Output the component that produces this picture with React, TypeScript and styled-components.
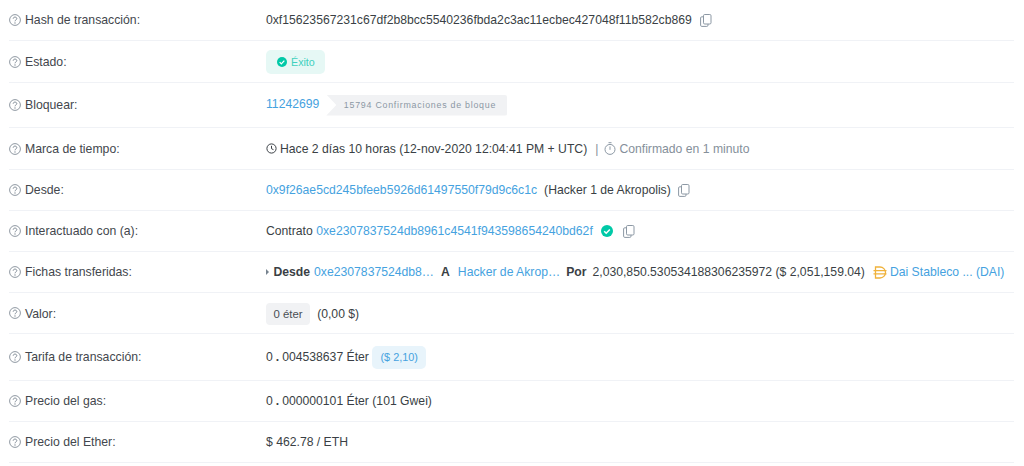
import React from "react";
import styled, { createGlobalStyle } from "styled-components";

const Global = createGlobalStyle`
  html, body { margin: 0; padding: 0; background: #fff; }
  body { font-family: "Liberation Sans", Arial, sans-serif; font-size: 12.25px; color: #4a4f55; overflow: hidden; }
`;
const Page = styled.div`
  width: 1024px; height: 466px; box-sizing: border-box; padding: 0 10px 0 9px; background: #fff; overflow: hidden;
`;
const Row = styled.div<{ $h: number }>`
  height: ${(p) => p.$h}px; box-sizing: border-box; border-bottom: 1px solid #f0f2f6;
  display: flex; align-items: center;
`;
const Label = styled.div`
  width: 257px; flex: none; display: flex; align-items: center; gap: 4px; color: #43474d;
`;
const Value = styled.div`
  flex: 1; min-width: 0; display: flex; align-items: center; white-space: nowrap; color: #3a3f45; font-size: 12.19px;
`;
const Link = styled.a`color: #45a2e0; text-decoration: none;`;
const Muted = styled.span`color: #858f9a;`;
const Gap = styled.span<{ $w: number }>`display: inline-block; width: ${(p) => p.$w}px; flex: none;`;
const StatusPill = styled.span`
  display: inline-flex; align-items: center; gap: 4px; height: 24px; padding: 0 10px 0 11px; border-radius: 5px;
  background: #e6f8f5; color: #3fd0bd; font-size: 10.7px;
`;
const BlockNumber = styled(Link)`position: relative; top: -1px;`;
const BlockTag = styled.span`
  margin-left: 7px; height: 21px; padding: 0 11px 0 17.5px; display: inline-flex; align-items: center;
  background: #f1f2f4; color: #8c98a4; font-size: 8.85px; letter-spacing: 0.75px; border-radius: 0 2px 2px 0;
  clip-path: polygon(0 0, 100% 0, 100% 100%, 0 100%, 10px 50%);
`;
const GreyPill = styled.span`
  display: inline-flex; align-items: center; height: 22px; padding: 0 7.5px; border-radius: 4px;
  background: #f1f2f4; color: #4a4f55; font-size: 11.4px; position: relative; top: 1px;
`;
const Shift = styled.span`position: relative; top: 1px;`;
const BluePill = styled.span`
  display: inline-flex; align-items: center; height: 23px; padding: 0 8px; border-radius: 5px; margin-left: 3.5px;
  background: #e8f4fb; color: #45a2e0; font-size: 10.9px;
`;
const Strong = styled.b`color: #3a3f45;`;
const Dot = styled.b`color: #3a3f45; margin: 0 3px 0 3px;`;

const Help = () => (
  <svg width="12" height="12" viewBox="0 0 12 12" fill="none">
    <circle cx="6" cy="6" r="5.4" stroke="#8f98a2" strokeWidth="1" />
    <path d="M4.2 4.7C4.2 3.7 5 3.1 6 3.1s1.8.6 1.8 1.5c0 1.3-1.8 1.3-1.8 2.7" stroke="#7f8a95" strokeWidth="1" />
    <circle cx="6" cy="9" r="0.65" fill="#7f8a95" />
  </svg>
);
const Copy = () => (
  <svg width="12" height="13" viewBox="0 0 12 13" fill="none" stroke="#8c98a4" strokeWidth="1">
    <rect x="3.5" y="0.5" width="7.5" height="9.5" rx="1.2" />
    <path d="M3.5 2.8H1.8A1.2 1.2 0 0 0 .6 4v7.2A1.2 1.2 0 0 0 1.8 12.4h5A1.2 1.2 0 0 0 8 11.2V10" />
  </svg>
);
const Check = ({ s }: { s: number }) => (
  <svg width={s} height={s} viewBox="0 0 12 12">
    <circle cx="6" cy="6" r="6" fill="#00c9a7" />
    <path d="M3.2 6.2l2 2 3.6-3.8" stroke="#fff" strokeWidth="1.5" fill="none" />
  </svg>
);
const Clock = () => (
  <svg width="11" height="11" viewBox="0 0 11 11" fill="none" stroke="#3a3f45" strokeWidth="1">
    <circle cx="5.5" cy="5.5" r="4.6" />
    <path d="M5.5 2.8v2.9l2 1" />
  </svg>
);
const Timer = () => (
  <svg width="12" height="13" viewBox="0 0 12 13" fill="none" stroke="#8c98a4" strokeWidth="1">
    <circle cx="6" cy="7.4" r="5" />
    <path d="M4.5.7h3M6 4.4v3.4" />
  </svg>
);
const Caret = () => (
  <svg width="3" height="6" viewBox="0 0 3 6"><path d="M0 0l3 3-3 3z" fill="#77838f" /></svg>
);
const Dai = () => (
  <svg width="14" height="13" viewBox="0 0 14 13" fill="none" stroke="#f0b23b" strokeWidth="1.3">
    <path d="M2.5 1h4.5a5.5 5.5 0 0 1 0 11H2.5z" />
    <path d="M0.5 4.7h13M0.5 7.8h13" />
  </svg>
);

export default function App() {
  return (
    <Page>
      <Global />
      <Row $h={41}>
        <Label><Help />Hash de transacción:</Label>
        <Value>0xf15623567231c67df2b8bcc5540236fbda2c3ac11ecbec427048f11b582cb869<Gap $w={8} /><Copy /></Value>
      </Row>
      <Row $h={42}>
        <Label><Help />Estado:</Label>
        <Value><StatusPill><Check s={10} />Éxito</StatusPill></Value>
      </Row>
      <Row $h={45}>
        <Label><Help />Bloquear:</Label>
        <Value><BlockNumber>11242699</BlockNumber><BlockTag>15794 Confirmaciones de bloque</BlockTag></Value>
      </Row>
      <Row $h={42}>
        <Label><Help />Marca de tiempo:</Label>
        <Value>
          <Clock /><Gap $w={3} />Hace 2 días 10 horas (12-nov-2020 12:04:41 PM + UTC)<Gap $w={8} /><Muted>|</Muted><Gap $w={6} /><Timer /><Gap $w={3} /><Muted>Confirmado en 1 minuto</Muted>
        </Value>
      </Row>
      <Row $h={41}>
        <Label><Help />Desde:</Label>
        <Value><Link>0x9f26ae5cd245bfeeb5926d61497550f79d9c6c1c</Link><Gap $w={7} />(Hacker 1 de Akropolis)<Gap $w={7} /><Copy /></Value>
      </Row>
      <Row $h={41}>
        <Label><Help />Interactuado con (a):</Label>
        <Value>Contrato<Gap $w={3.5} /><Link>0xe2307837524db8961c4541f943598654240bd62f</Link><Gap $w={8} /><Check s={12} /><Gap $w={10} /><Copy /></Value>
      </Row>
      <Row $h={41}>
        <Label><Help />Fichas transferidas:</Label>
        <Value>
          <Caret /><Gap $w={4.5} /><Strong>Desde</Strong><Gap $w={4} /><Link>0xe2307837524db8…</Link><Gap $w={7} /><Strong>A</Strong><Gap $w={8} /><Link>Hacker de Akrop…</Link><Gap $w={6} /><Strong>Por</Strong><Gap $w={6} />2,030,850.530534188306235972 ($ 2,051,159.04)<Gap $w={8} /><Dai /><Gap $w={3} /><Link>Dai Stableco ... (DAI)</Link>
        </Value>
      </Row>
      <Row $h={41}>
        <Label><Shift><Help /></Shift><Shift>Valor:</Shift></Label>
        <Value><GreyPill>0 éter</GreyPill><Gap $w={7} /><Shift>(0,00 $)</Shift></Value>
      </Row>
      <Row $h={47}>
        <Label><Help />Tarifa de transacción:</Label>
        <Value>0<Dot>.</Dot>004538637 Éter<BluePill>($ 2,10)</BluePill></Value>
      </Row>
      <Row $h={41}>
        <Label><Help />Precio del gas:</Label>
        <Value>0<Dot>.</Dot>000000101 Éter (101 Gwei)</Value>
      </Row>
      <Row $h={41}>
        <Label><Help />Precio del Ether:</Label>
        <Value>$ 462.78 / ETH</Value>
      </Row>
    </Page>
  );
}
